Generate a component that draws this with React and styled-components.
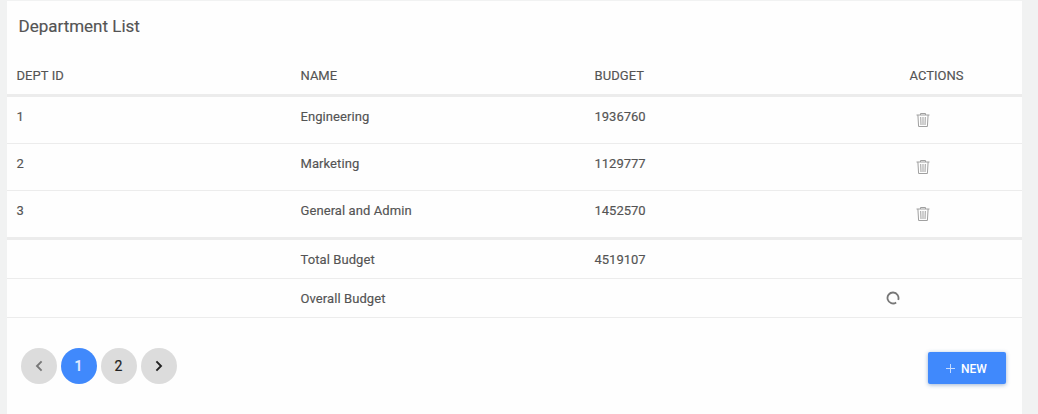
import React from "react";
import styled, { createGlobalStyle } from "styled-components";

const GlobalStyle = createGlobalStyle`
  * { box-sizing: border-box; }
  body {
    margin: 0;
    background: #f1f2f2;
    font-family: Roboto, "Liberation Sans", sans-serif;
    font-size: 13px;
    color: #545454;
  }
`;

const Page = styled.main`
  height: 414px;
  overflow: hidden;
  padding: 1px 16px 0 7px;
`;

const Card = styled.section`
  height: 430px;
  background: #fefefe;
`;

const Title = styled.h1`
  margin: 0;
  height: 55px;
  padding: 15px 12px 0 11.5px;
  font-size: 17px;
  font-weight: 400;
  line-height: 20px;
  letter-spacing: 0;
  -webkit-text-stroke: 0.15px currentColor;
`;

const Row = styled.div`
  display: grid;
  grid-template-columns: 284px 294px 308px 1fr;
  align-items: start;
  height: ${(p) => p.$height}px;
  padding-top: ${(p) => p.$top}px;
  padding-left: 9.5px;
  border-bottom: ${(p) => (p.$thick ? "3px" : "1px")} solid #ececec;
`;

const Cell = styled.div`
  line-height: 16px;
  letter-spacing: ${(p) => p.$spacing ?? 0.08}px;
  -webkit-text-stroke: 0.15px currentColor;
`;

const HeadCell = styled(Cell)`
  padding-left: ${(p) => (p.$last ? "7px" : "0")};
`;

const IconButton = styled.button`
  display: flex;
  justify-self: start;
  margin: 3px 0 0 13px;
  padding: 0;
  border: 0;
  background: none;
  color: #a0a0a0;
`;

const Loading = styled.div`
  display: flex;
  margin: 0 0 0 -17px;
`;

const Footer = styled.footer`
  display: flex;
  justify-content: space-between;
  align-items: flex-start;
  padding: 30px 16px 0 14px;
`;

const Pager = styled.nav`
  display: flex;
  gap: 4px;
`;

const PageButton = styled.button`
  display: flex;
  align-items: center;
  justify-content: center;
  width: 36px;
  height: 36px;
  padding: 0 1px 0 0;
  border: 0;
  border-radius: 50%;
  font: ${(p) => (p.$active ? 500 : 400)} 14px Roboto, sans-serif;
  -webkit-text-stroke: 0.2px currentColor;
  background: ${(p) => (p.$active ? "#4089fc" : "#dcdcdc")};
  color: ${(p) => (p.$active ? "#e2edff" : p.$muted ? "#777" : "#222")};
`;

const NewButton = styled.button`
  display: flex;
  align-items: center;
  gap: 6px;
  width: 78px;
  height: 32px;
  margin-top: 4px;
  padding: 1px 0 0 18px;
  border: 0;
  border-radius: 2px;
  background: #4089fc;
  color: #fff;
  font: 500 12px Roboto, sans-serif;
  box-shadow: 0 1px 4px rgba(40, 90, 160, 0.45);
`;

const TrashIcon = () => (
  <svg width="14" height="16" viewBox="0 0 14 16" fill="none" stroke="currentColor">
    <path d="M0.5 3H13.5M4.5 3V1.5H9.5V3M1.9 3L2.6 14.5H11.4L12.1 3M4.7 5L5 13M7 5V13M9.3 5L9 13" />
  </svg>
);

const Spinner = () => (
  <svg width="14" height="14" viewBox="0 0 14 14" fill="none" stroke="#777" strokeWidth="1.8">
    <path d="M12.17 8.88A5.5 5.5 0 1 0 10.15 11.5" />
  </svg>
);

const Chevron = ({ right }) => (
  <svg width="8" height="12" viewBox="0 0 8 12" fill="none" stroke="currentColor" strokeWidth="1.9">
    <path d={right ? "M1.4 1.4L6 6L1.4 10.6" : "M6.6 1.4L2 6L6.6 10.6"} />
  </svg>
);

const PlusIcon = () => (
  <svg width="9" height="9" viewBox="0 0 9 9" stroke="#c5dbff">
    <path d="M0 4.5H9M4.5 0V9" />
  </svg>
);

const departments = [
  { id: 1, name: "Engineering", budget: 1936760 },
  { id: 2, name: "Marketing", budget: 1129777 },
  { id: 3, name: "General and Admin", budget: 1452570 },
];

export default function App() {
  return (
    <Page>
      <GlobalStyle />
      <Card>
        <Title>Department List</Title>
        <Row $height={41} $top={12} $thick>
          <HeadCell>DEPT ID</HeadCell>
          <HeadCell $spacing={0}>NAME</HeadCell>
          <HeadCell>BUDGET</HeadCell>
          <HeadCell $spacing={0} $last>ACTIONS</HeadCell>
        </Row>
        {departments.map((d, i) => (
          <Row key={d.id} $height={i === 2 ? 49 : 47} $top={12} $thick={i === 2}>
            <Cell>{d.id}</Cell>
            <Cell>{d.name}</Cell>
            <Cell $spacing={0}>{d.budget}</Cell>
            <IconButton aria-label="Delete"><TrashIcon /></IconButton>
          </Row>
        ))}
        <Row $height={39} $top={12}>
          <Cell />
          <Cell>Total Budget</Cell>
          <Cell $spacing={0}>4519107</Cell>
        </Row>
        <Row $height={39} $top={12}>
          <Cell />
          <Cell>Overall Budget</Cell>
          <Cell />
          <Loading><Spinner /></Loading>
        </Row>
        <Footer>
          <Pager>
            <PageButton $muted aria-label="Previous"><Chevron /></PageButton>
            <PageButton $active>1</PageButton>
            <PageButton>2</PageButton>
            <PageButton aria-label="Next"><Chevron right /></PageButton>
          </Pager>
          <NewButton><PlusIcon />NEW</NewButton>
        </Footer>
      </Card>
    </Page>
  );
}
